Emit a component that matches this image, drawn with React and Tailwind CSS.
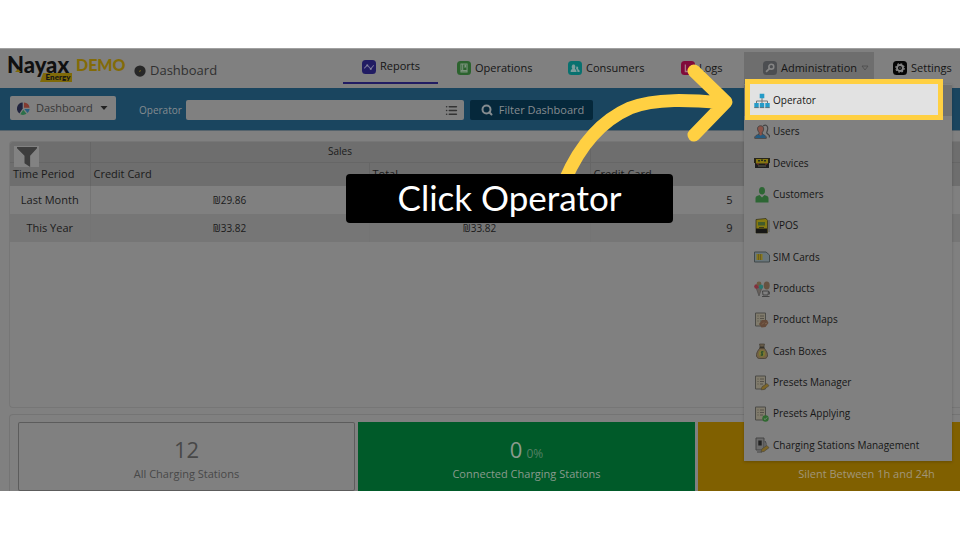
import React, { useState } from "react";
import { List, Search } from "lucide-react";

const Svg = ({ children, className = "w-4 h-4" }) => (
  <svg viewBox="0 0 16 16" className={`shrink-0 ${className}`} fill="none" aria-hidden="true">
    {children}
  </svg>
);

const Sheet = ({ children }) => (
  <Svg>
    <path d="M1.5 1h10v13h-10z" fill="#807b6c" stroke="#4b4b47" />
    <path d="M3.5 4h1M3.5 6.5h1M3.5 9h1M6 4h4M6 6.5h4M6 9h3" stroke="#4f4c45" strokeWidth="0.9" />
    {children}
  </Svg>
);

const Pencil = () => (
  <path d="M7 14.8l1-3 5-3.3 2 2.2-5 3.8z" fill="#7d6526" stroke="#4e4939" strokeWidth="0.7" />
);

const menuItems = [
  {
    label: "Operator",
    icon: (
      <Svg>
        <path d="M8 5v6M2.5 11V8h11v3" stroke="#777" />
        <path d="M5.7 .7h4.6v4.6H5.7zM.3 10h4.4v4.6H.3zM5.8 10h4.4v4.6H5.8zM11.3 10h4.4v4.6h-4.4z" fill="#259bc8" />
        <path d="M.3 14.6h4.4M5.8 14.6h4.4M11.3 14.6h4.4" stroke="#56717d" />
      </Svg>
    ),
  },
  {
    label: "Users",
    icon: (
      <Svg>
        <path d="M9 2c3-2 5 0 4.700 3-.2 2-1 3-1 4l2.700 2.500v2" stroke="#444" strokeWidth="1.200" />
        <path d="M.7 14.300c0-3 2-3 4.300-4v-2C2.800 5.800 3 1.800 6.500 1.800s4 4 1.800 6.500v2c2.500 1 4 1.300 4 4z" fill="#8b5348" stroke="#444" />
        <path d="M1.200 14c0-2.500 2-2.700 4-3.500l1.500 1.300 1.500-1.300c2 .8 3.500 1 3.500 3.500z" fill="#245b80" />
      </Svg>
    ),
  },
  {
    label: "Devices",
    icon: (
      <Svg>
        <path d="M0 3h16v5H0z" fill="#28251b" />
        <path d="M1 8h14v5H1z" fill="#1d1d1d" />
        <path d="M2 4h12v4.500H2z" fill="#857611" />
        <path d="M4 5h2v1.500H4zM7 4.500h2V6H7zM10 5h2v1.500h-2z" fill="#27301c" />
        <path d="M3 9h2M11 9h2" stroke="#89352b" />
        <path d="M4 11h8" stroke="#61614e" />
      </Svg>
    ),
  },
  {
    label: "Customers",
    icon: (
      <Svg>
        <ellipse cx="8" cy="3.800" rx="3" ry="3.800" fill="#2d6634" />
        <path d="M1.500 15.500V11c0-2 2.500-2.500 4-3L8 10.500 10.500 8c1.500.5 4 1 4 3v4.500z" fill="#2d6634" />
      </Svg>
    ),
  },
  {
    label: "VPOS",
    icon: (
      <Svg>
        <path d="M2 1.500L12 .5l1.500 2V15H2z" fill="#857911" stroke="#37351b" strokeWidth="0.800" />
        <path d="M4 4h7v3.500H4z" fill="#425b2b" />
        <path d="M2 10.500h11V15H2z" fill="#171716" />
        <path d="M5 9.500h5" stroke="#3c3a1d" />
        <path d="M15 2v12" stroke="#555" />
      </Svg>
    ),
  },
  {
    label: "SIM Cards",
    icon: (
      <Svg>
        <path d="M.5 3H12l3.500 3v7H.5z" fill="#69767b" stroke="#41494b" />
        <path d="M2.500 5h6v6h-6z" fill="#86761c" />
        <path d="M4.500 5v6M6.500 5v6" stroke="#554d23" strokeWidth="0.600" />
      </Svg>
    ),
  },
  {
    label: "Products",
    icon: (
      <Svg>
        <path d="M2 6.500h6L5 15z" fill="#67605b" stroke="#444" strokeWidth="0.600" />
        <circle cx="2.500" cy="5.500" r="2.300" fill="#842f3c" />
        <circle cx="5" cy="2.800" r="2.400" fill="#6c5a42" />
        <circle cx="7" cy="5.800" r="2.200" fill="#28766f" />
        <ellipse cx="12.700" cy="4.500" rx="3" ry="4" fill="#665241" />
        <path d="M8.500 10h6l-.5 4H9zM8 15.500h7.500M14.500 11h1.200v2h-1.200" stroke="#444" />
      </Svg>
    ),
  },
  {
    label: "Product Maps",
    icon: (
      <Sheet>
        <path d="M5 12l3-4h5l1.500 3-3 4-4 .5z" fill="#654a39" />
        <path d="M8 12.500l2-2M11 12l2-1" stroke="#80654f" />
      </Sheet>
    ),
  },
  {
    label: "Cash Boxes",
    icon: (
      <Svg>
        <path d="M5.500 1h5L9.800 4H6.200z" fill="#685c49" stroke="#423d34" strokeWidth="0.700" />
        <path d="M6 5h4c4 4 5 10 .8 10.500H5.200C1 15 2 9 6 5z" fill="#756345" stroke="#443d32" strokeWidth="0.800" />
        <path d="M5.500 4.500h5" stroke="#35322b" strokeWidth="1.500" />
        <circle cx="8" cy="10.500" r="3.200" fill="#7c7832" />
        <path d="M9.500 8.800H7.700c-1.400 1.700 2 1.500.6 3.300H6.600M8 8v5" stroke="#274d2e" />
      </Svg>
    ),
  },
  { label: "Presets Manager", icon: <Sheet><Pencil /></Sheet> },
  {
    label: "Presets Applying",
    icon: (
      <Sheet>
        <circle cx="11.500" cy="12.500" r="3.200" fill="#2f6930" />
        <path d="M9.900 12.500l1.200 1.200 2-2.200" stroke="#7b8b78" />
      </Sheet>
    ),
  },
  {
    label: "Charging Stations Management",
    icon: (
      <Svg>
        <path d="M2 1h8v12H2z" fill="#6b6b6b" stroke="#444" />
        <path d="M4.300 3.500h3.400v5H4.300z" fill="#222" />
        <path d="M3 15h5M11 4l1 2v4" stroke="#444" />
        <Pencil />
      </Svg>
    ),
  },
];

const navItems = [
  {
    label: "Reports",
    width: "w-[95px]",
    icon: (
      <Svg className="w-3.5 h-3.5">
        <rect width="16" height="16" rx="4" fill="#211c63" />
        <path d="M2.500 9.500L6 6l4 4 3.500-4" stroke="#77759b" strokeWidth="1.200" />
        <path d="M5 5.200h2v2H5zM9 9h2v2H9z" fill="#85839f" />
      </Svg>
    ),
  },
  {
    label: "Operations",
    width: "w-[111px]",
    icon: (
      <Svg className="w-3.5 h-3.5">
        <rect width="16" height="16" rx="4" fill="#2c632e" />
        <path d="M4.500 3.500h7v9h-7zM6.500 3.500v7.500M4.500 11h7" stroke="#7d947e" strokeWidth="1.200" />
        <path d="M8.500 4h2v4l-1-1-1 1z" fill="#7d947e" />
      </Svg>
    ),
  },
  {
    label: "Consumers",
    width: "w-[113px]",
    icon: (
      <Svg className="w-3.5 h-3.5">
        <rect width="16" height="16" rx="4" fill="#08716f" />
        <path d="M3 12.500c0-3 1-3 2-3.500-1.500-2-.5-5.500 1.500-5 2 0 2.300 3 1.300 5 1 .5 2 1 2 3.500z" fill="#7c9d9c" />
        <path d="M9.500 6.500c2.500-.5 2.500 1.500 1.800 3 1.500.5 2 1 2 3h-2.500c0-2-.5-2.700-1.500-3.500z" fill="#7c9d9c" />
      </Svg>
    ),
  },
  {
    label: "Logs",
    width: "w-[82px]",
    icon: (
      <Svg className="w-3.5 h-3.5">
        <rect width="16" height="16" rx="4" fill="#800b3a" />
        <path d="M5 4v8h6" stroke="#a47587" strokeWidth="1.500" />
      </Svg>
    ),
  },
  {
    label: "Administration",
    width: "w-[130px]",
    icon: (
      <Svg className="w-3.5 h-3.5">
        <rect width="16" height="16" rx="4" fill="#4c4e51" />
        <circle cx="9.500" cy="6.500" r="2.800" stroke="#858585" strokeWidth="1.800" />
        <path d="M7.500 8.500L3.500 12.500" stroke="#858585" strokeWidth="2" />
      </Svg>
    ),
  },
  {
    label: "Settings",
    width: "w-[86px]",
    icon: (
      <Svg className="w-3.5 h-3.5">
        <rect width="16" height="16" rx="4" fill="#050505" />
        <circle cx="8" cy="8" r="3.400" stroke="#838383" strokeWidth="2.200" />
        <circle cx="8" cy="8" r="4.800" stroke="#838383" strokeWidth="1.400" strokeDasharray="2 1.770" />
        <circle cx="8" cy="8" r="0.800" fill="#838383" />
      </Svg>
    ),
  },
];

const rows = [
  { period: "Last Month", credit: "₪29.86", total: "₪29.86", count: 5 },
  { period: "This Year", credit: "₪33.82", total: "₪33.82", count: 9 },
];

const Logo = () => (
  <a href="#home" className="relative flex h-10 w-[119px] shrink-0 items-center pb-2 font-['Lato'] leading-5">
    <span className="w-[69px] text-[22px] font-black text-[#101010]">Nayax</span>
    <span className="text-[16px] font-black text-[#836b08]">DEMO</span>
    <svg viewBox="0 0 6 3" className="absolute left-2 top-5 h-[3px] w-1.5" aria-hidden="true">
      <path d="M0 3h6L3 0z" fill="#806a08" />
    </svg>
    <span className="absolute left-[33px] top-6 flex h-[9px] w-[32px] items-center justify-center bg-[#806a08] pl-1 text-[8px] font-black leading-[9px] text-[#151515] [clip-path:polygon(10%_0,100%_0,100%_100%,0_100%)]">
      Energy
    </span>
  </a>
);

const AdminMenu = () => (
  <ul className="absolute left-0 top-8 z-20 grid h-[377px] w-[208px] grid-rows-12 bg-[#808080] pt-px shadow-[0_1px_3px_rgba(0,0,0,0.2)]">
    {menuItems.map((item, i) => (
      <li key={item.label} className={i === 0 ? "relative bg-[#717171]" : ""}>
        {i === 0 && (
          <div className="absolute -top-1.5 left-px h-[41px] w-[198px] border-[5px] border-[#ffd042] bg-[#e2e2e2]" />
        )}
        <a
          href="#admin"
          className="relative flex h-full items-center gap-[3px] pl-[10px] text-[10px] text-[#161616]"
        >
          {item.icon}
          {item.label}
        </a>
      </li>
    ))}
  </ul>
);

const Header = () => (
  <header className="flex h-10 border-t border-[#a0a0a0] bg-[#808080] pl-[7px]">
    <Logo />
    <div className="flex items-center gap-1 pl-2 pt-1">
      <Svg className="w-3 h-3">
        <circle cx="8" cy="8" r="7.500" fill="#272727" />
        <path d="M7 9l2-2" stroke="#66591f" strokeWidth="1.500" />
      </Svg>
      <h1 className="text-[13px] text-[#303030]">Dashboard</h1>
    </div>
    <nav className="ml-auto flex pt-[3px]">
      {navItems.map((item) => {
        const isActive = item.label === "Reports";
        const isOpen = item.label === "Administration";
        return (
          <div key={item.label} className={`relative ${item.width}`}>
            <a
              href="#nav"
              className={`flex items-center gap-1 pl-[19px] text-[11px] text-[#151515] ${
                isActive ? "h-8 border-b-2 border-[#211c63] pb-px" : "h-9 pb-1"
              } ${isOpen ? "bg-[#6e6e6e]" : ""}`}
            >
              {item.icon}
              {item.label}
              {isOpen && (
                <Svg className="w-2 h-2">
                  <path d="M2 4h12l-6 8z" stroke="#4a4a4a" strokeWidth="1.500" />
                </Svg>
              )}
            </a>
            {isOpen && <AdminMenu />}
          </div>
        );
      })}
    </nav>
  </header>
);

const FilterBar = () => {
  const [operator, setOperator] = useState("");

  return (
    <div className="flex h-[42px] items-end bg-[#1a455f] pb-[10px] pl-[10px] text-[11px]">
      <button
        type="button"
        className="flex h-6 w-[106px] items-center rounded-xs bg-[#808080] pl-[7px] text-[#373737]"
      >
        <Svg className="mr-1.5 w-[13px] h-[13px]">
          <path d="M7 8V.5A7.500 7.500 0 0 0 3 14z" fill="#20243f" />
          <path d="M8.500 7V.5A7.300 7.300 0 0 1 15.500 7z" fill="#823a31" />
          <path d="M9 8.500h6.500a7.500 7.500 0 0 1-2.500 5z" fill="#285f80" />
          <path d="M7.700 9.500l4 5A7.500 7.500 0 0 1 4 15z" fill="#2b7049" />
        </Svg>
        Dashboard
        <Svg className="ml-auto mr-2 w-2 h-2">
          <path d="M1 4h14l-7 8z" fill="#222" />
        </Svg>
      </button>
      <label htmlFor="operator" className="pl-[23px] pr-1 leading-5 text-[10px] text-[#858c90]">
        Operator
      </label>
      <div className="relative w-[278px]">
        <input
          id="operator"
          type="text"
          value={operator}
          onChange={(e) => setOperator(e.target.value)}
          className="block h-5 w-full rounded-xs bg-[#808080] px-2 outline-none"
        />
        <List size={13} strokeWidth={3} className="absolute right-1.5 top-1 text-[#333]" />
      </div>
      <button
        type="button"
        className="ml-1.5 flex h-5 w-[123px] items-center gap-1.5 rounded-xs bg-[#05283b] pl-[11px] text-[#858c90]"
      >
        <Search size={12} strokeWidth={4} />
        Filter Dashboard
      </button>
    </div>
  );
};

const SalesTable = () => (
  <section className="h-[267px] overflow-hidden rounded-tl-sm rounded-bl-sm border border-r-0 border-[#767676]">
    <table className="w-[1026px] table-fixed border-collapse text-[11px] text-[#1b1b1b]">
      <colgroup>
        <col className="w-[80px]" />
        <col className="w-[279px]" />
        <col className="w-[221px]" />
        <col className="w-[279px]" />
        <col />
      </colgroup>
      <thead className="bg-[#6e6e6e] text-left">
        <tr className="h-5">
          <th className="relative border-r border-b border-[#666]">
            <button
              type="button"
              aria-label="Filter"
              className="absolute left-1 top-1 flex h-[21px] w-[25px] items-center justify-center bg-[#828282]"
            >
              <Svg className="w-5 h-5">
                <path d="M0 0h16v1L10.500 7v9L6 13V7L0 1z" fill="#3d3d3d" />
              </Svg>
            </button>
          </th>
          <th colSpan={2} className="border-r border-b border-[#666] text-center text-[10px] font-normal">
            Sales
          </th>
          <th colSpan={2} className="border-b border-[#666]" />
        </tr>
        <tr className="h-6">
          {["Time Period", "Credit Card", "Total", "Credit Card", "Total"].map((title, i) => (
            <th key={i} className="whitespace-nowrap border-r border-[#666] pl-[3px] font-normal leading-4">
              {title}
            </th>
          ))}
        </tr>
      </thead>
      <tbody className="text-center leading-4">
        {rows.map((row) => (
          <tr key={row.period} className="h-7 even:bg-[#767676]">
            <td className="border-r border-[#747474]">{row.period}</td>
            <td className="border-r border-[#747474] text-[10px]">{row.credit}</td>
            <td className="border-r border-[#747474] text-[10px]">{row.total}</td>
            <td className="border-r border-[#747474]">{row.count}</td>
            <td />
          </tr>
        ))}
      </tbody>
    </table>
  </section>
);

const StatCard = ({ value, percent, label, className }) => (
  <div className={`flex h-[69px] w-[337px] shrink-0 flex-col items-center pt-3 ${className}`}>
    <p className="flex h-[30px] items-baseline text-[22px] leading-[30px]">
      {value}
      {percent && <span className="pl-1 text-[12px] opacity-60">{percent}</span>}
    </p>
    <p className="text-[11px] leading-5">{label}</p>
  </div>
);

const Callout = () => (
  <>
    <svg viewBox="0 0 190 130" className="absolute left-[550px] top-2 z-30 h-[130px] w-[190px]" fill="none" aria-hidden="true">
      <path
        d="M15 124C28 94 48 66 80 52C106 42 140 44 174 47M144 15l32 31-32 33"
        stroke="#ffd042"
        strokeWidth="13"
        strokeLinecap="round"
        strokeLinejoin="round"
      />
    </svg>
    <div className="absolute left-[346px] top-[126px] z-30 flex h-[49px] w-[327px] items-center justify-center rounded bg-black pb-0.5 font-['Lato'] text-[35px] text-white">
      Click Operator
    </div>
  </>
);

const App = () => {
  return (
    <div className="bg-white py-12 font-['Open_Sans',sans-serif]">
      <main className="relative overflow-hidden bg-[#808080]">
        <Header />
        <FilterBar />
        <div className="border-t border-[#55636c] pl-[9px] pt-[10px]">
          <SalesTable />
          <section className="mt-1.5 flex gap-[3px] rounded-tl-sm border-t border-l border-[#747474] pl-2 pt-[7px]">
            <StatCard value="12" label="All Charging Stations" className="rounded-xs ring-1 ring-inset ring-[#5c5c5c] text-[#484848]" />
            <StatCard value="0" percent="0%" label="Connected Charging Stations" className="bg-[#005a29] text-[#8a9a8e]" />
            <StatCard value="0" label="Silent Between 1h and 24h" className="bg-[#806000] text-[#a0967a]" />
          </section>
        </div>
        <Callout />
      </main>
    </div>
  );
};

export default App;
